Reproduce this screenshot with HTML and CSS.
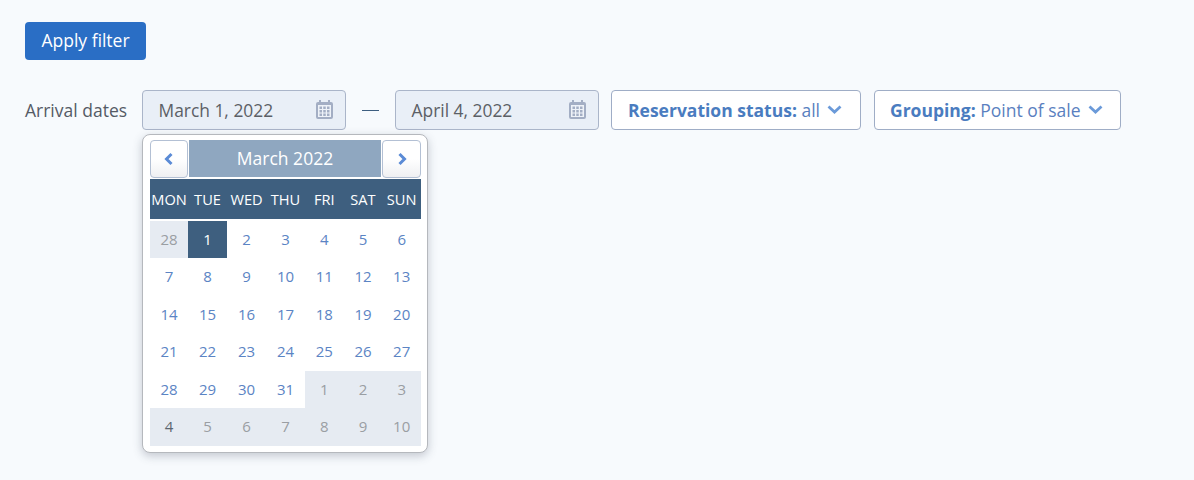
FILE: index.html
```html
<!DOCTYPE html>
<html lang="en">
<head>
<meta charset="utf-8">
<title>Filter</title>
<link rel="stylesheet" href="styles.css">
</head>
<body>
<main class="page">
  <button class="apply" type="button">Apply filter</button>
  <div class="filters">
    <span class="label">Arrival dates</span>
    <div class="date-wrap">
      <div class="date"><span>March 1, 2022</span>
        <svg class="cal" viewBox="0 0 17 19"><path d="M3 0h2v2h7V0h2v2h1a2 2 0 0 1 2 2v13a2 2 0 0 1-2 2H2a2 2 0 0 1-2-2V4a2 2 0 0 1 2-2h1z" fill="#a3aec4"/><rect x="2" y="5" width="13" height="12" fill="#eef2f8"/><g fill="#a3aec4"><rect x="3.5" y="6.5" width="2.5" height="2.5"/><rect x="7.25" y="6.5" width="2.5" height="2.5"/><rect x="11" y="6.5" width="2.5" height="2.5"/><rect x="3.5" y="10" width="2.5" height="2.5"/><rect x="7.25" y="10" width="2.5" height="2.5"/><rect x="11" y="10" width="2.5" height="2.5"/><rect x="3.5" y="13.5" width="2.5" height="2.5"/><rect x="7.25" y="13.5" width="2.5" height="2.5"/><rect x="11" y="13.5" width="2.5" height="2.5"/></g></svg>
      </div>
      <div class="picker">
        <div class="picker-head">
          <button class="nav" type="button"><svg viewBox="0 0 12 14"><path d="M8.5 2 3.5 7l5 5" fill="none" stroke="#5b8bd6" stroke-width="3"/></svg></button>
          <div class="month">March 2022</div>
          <button class="nav" type="button"><svg viewBox="0 0 12 14"><path d="M3.5 2l5 5-5 5" fill="none" stroke="#5b8bd6" stroke-width="3"/></svg></button>
        </div>
        <div class="weekdays"><span>MON</span><span>TUE</span><span>WED</span><span>THU</span><span>FRI</span><span>SAT</span><span>SUN</span></div>
        <div class="days">
          <span class="out">28</span><span class="sel">1</span><span>2</span><span>3</span><span>4</span><span>5</span><span>6</span>
          <span>7</span><span>8</span><span>9</span><span>10</span><span>11</span><span>12</span><span>13</span>
          <span>14</span><span>15</span><span>16</span><span>17</span><span>18</span><span>19</span><span>20</span>
          <span>21</span><span>22</span><span>23</span><span>24</span><span>25</span><span>26</span><span>27</span>
          <span>28</span><span>29</span><span>30</span><span>31</span><span class="out">1</span><span class="out">2</span><span class="out">3</span>
          <span class="out end">4</span><span class="out">5</span><span class="out">6</span><span class="out">7</span><span class="out">8</span><span class="out">9</span><span class="out">10</span>
        </div>
      </div>
    </div>
    <span class="dash"></span>
    <div class="date"><span>April 4, 2022</span>
      <svg class="cal" viewBox="0 0 17 19"><path d="M3 0h2v2h7V0h2v2h1a2 2 0 0 1 2 2v13a2 2 0 0 1-2 2H2a2 2 0 0 1-2-2V4a2 2 0 0 1 2-2h1z" fill="#a3aec4"/><rect x="2" y="5" width="13" height="12" fill="#eef2f8"/><g fill="#a3aec4"><rect x="3.5" y="6.5" width="2.5" height="2.5"/><rect x="7.25" y="6.5" width="2.5" height="2.5"/><rect x="11" y="6.5" width="2.5" height="2.5"/><rect x="3.5" y="10" width="2.5" height="2.5"/><rect x="7.25" y="10" width="2.5" height="2.5"/><rect x="11" y="10" width="2.5" height="2.5"/><rect x="3.5" y="13.5" width="2.5" height="2.5"/><rect x="7.25" y="13.5" width="2.5" height="2.5"/><rect x="11" y="13.5" width="2.5" height="2.5"/></g></svg>
    </div>
    <button class="select select-status" type="button"><span><b>Reservation status:</b> all</span>
      <svg class="chev" viewBox="0 0 15 9"><path d="M1.5 1.5l6 5.5 6-5.5" fill="none" stroke="#6b9ad9" stroke-width="2.8"/></svg>
    </button>
    <button class="select select-group" type="button"><span><b>Grouping:</b> Point of sale</span>
      <svg class="chev" viewBox="0 0 15 9"><path d="M1.5 1.5l6 5.5 6-5.5" fill="none" stroke="#6b9ad9" stroke-width="2.8"/></svg>
    </button>
  </div>
</main>
</body>
</html>
```
FILE: styles.css
```css
* { box-sizing: border-box; }
html, body { margin: 0; height: 100%; }
body {
  background: #f7fafd;
  font-family: "Open Sans", "Noto Sans", sans-serif;
  font-size: 17.5px;
  color: #555b66;
  overflow: hidden;
}
.page { padding: 22px 25px; }
.apply {
  display: block;
  width: 121px;
  height: 38px;
  padding: 0 0 2px;
  border: 0;
  border-radius: 4px;
  background: #2a6ec5;
  color: #fff;
  font: 17.5px "Open Sans", sans-serif;
}
.filters {
  display: flex;
  align-items: center;
  margin-top: 30px;
  height: 40px;
}
.label { width: 117px; color: #555b66; }
.date-wrap { position: relative; }
.date {
  display: flex;
  align-items: center;
  justify-content: space-between;
  width: 204px;
  height: 40px;
  padding: 0 12px 0 15.5px;
  background: #e9eff7;
  border: 1px solid #aab5c9;
  border-radius: 4px;
  color: #5c5f66;
  font-size: 17.4px;
}
.cal { width: 17px; height: 19px; margin-top: -1px; }
.dash {
  width: 17px;
  height: 1px;
  margin: 0 16px;
  background: #3d5e80;
}
.select {
  display: flex;
  align-items: center;
  height: 40px;
  padding: 0 0 0 16px;
  background: #fff;
  border: 1px solid #9fadc6;
  border-radius: 4px;
  color: #5a7fc0;
  font: 17.5px "Open Sans", sans-serif;
  white-space: nowrap;
}
.select b { color: #4a7cc0; font-weight: 700; }
.select-status { width: 250px; margin-left: 12px; }
.select-group { width: 247px; margin-left: 13px; padding-left: 15px; }
.chev { width: 15px; height: 9px; margin-left: 7.5px; margin-top: -1px; }
.picker {
  position: absolute;
  top: 44px;
  left: 0;
  width: 286px;
  height: 319px;
  padding: 5px 6px 0 7px;
  background: #fff;
  border: 1px solid #b5b8bd;
  border-radius: 8px;
  box-shadow: 0 3px 10px rgba(60, 70, 90, .28);
}
.picker-head {
  display: grid;
  grid-template-columns: 38px 1fr 39px;
  gap: 1px;
  height: 38px;
}
.nav {
  display: flex;
  align-items: center;
  justify-content: center;
  padding: 0;
  background: linear-gradient(#fff 50%, #eff0f2);
  border: 1px solid #b3c0d4;
  border-radius: 4px;
}
.nav svg { width: 12px; height: 14px; }
.month {
  height: 37px;
  background: #8fa7c0;
  color: #fff;
  font-size: 17.5px;
  line-height: 37px;
  text-align: center;
}
.weekdays {
  display: grid;
  grid-template-columns: 38px 39px 39px 39px repeat(3, 1fr);
  height: 40px;
  margin-top: 1px;
  background: #3e5f7f;
  color: #fff;
  font-size: 14.6px;
  line-height: 40px;
  text-align: center;
}
.days {
  display: grid;
  grid-template-columns: 38px 39px 39px 39px repeat(3, 1fr);
  grid-auto-rows: 37.45px;
  margin-top: 2px;
  color: #5b84c4;
  font-size: 15px;
  text-align: center;
}
.days span { line-height: 37.7px; }
.days .out { background: #e6ebf2; color: #9a9ea3; }
.days .end { color: #5c6670; }
.days .sel { background: #3e5f7f; color: #fff; }
```
